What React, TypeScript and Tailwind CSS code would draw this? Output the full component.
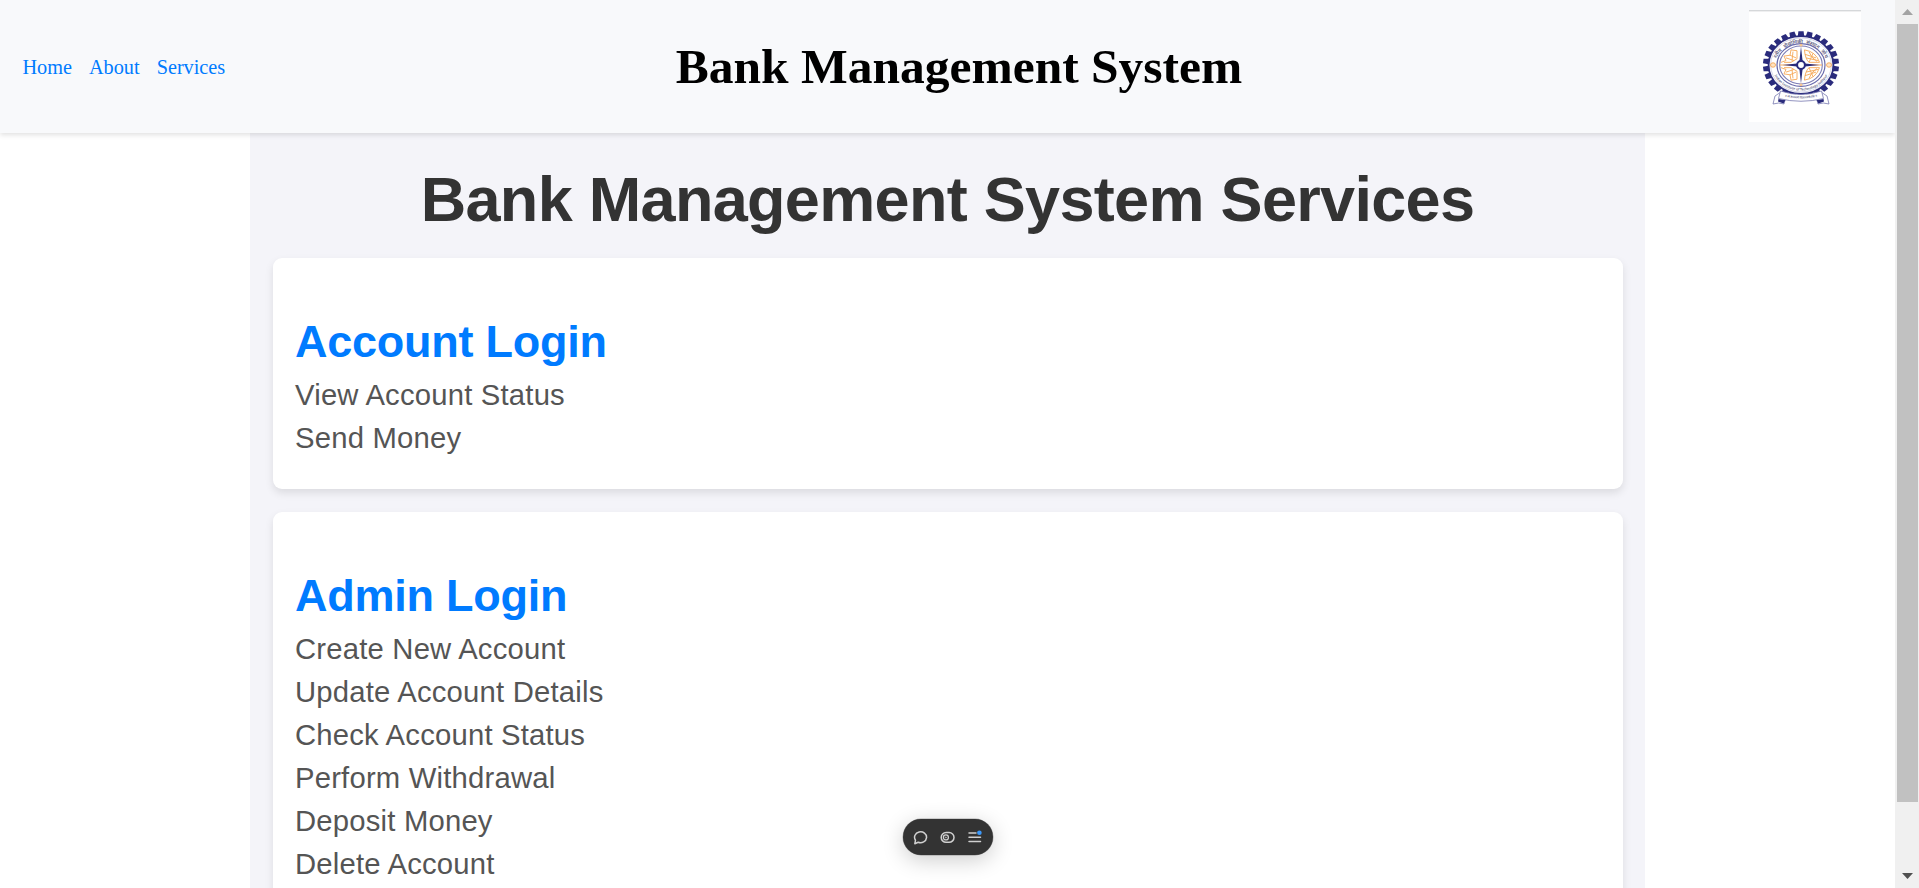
const links = ['Home', 'About', 'Services'];

const services = [
  { title: 'Account Login', items: ['View Account Status', 'Send Money'] },
  {
    title: 'Admin Login',
    items: [
      'Create New Account',
      'Update Account Details',
      'Check Account Status',
      'Perform Withdrawal',
      'Deposit Money',
      'Delete Account',
    ],
  },
];

const teeth = Array.from({ length: 26 }, (_, i) => (i * 360) / 26);
const quarters = [0, 90, 180, 270];

function Emblem() {
  return (
    <svg viewBox="0 0 112 112" className="mb-px block h-28 w-28 bg-white">
      <rect width="112" height="1.4" fill="#d6d8da" />
      <g transform="translate(52 55)">
        <g transform="scale(1 0.89)">
          <g fill="#2a2b7c">
            {teeth.map((a) => (
              <path key={a} d="M-3.2 -32.5 L-2.6 -38 H2.6 L3.2 -32.5 Z" transform={`rotate(${a})`} />
            ))}
          </g>
          <circle r="32.4" fill="#fff" stroke="#2a2b7c" strokeWidth="1.8" />
          <circle r="30.4" fill="none" stroke="#a9a9cf" strokeWidth="0.5" />
          <circle r="24" fill="none" stroke="#6a6bab" strokeWidth="1.2" />
          <circle r="21.3" fill="none" stroke="#7d7db5" strokeWidth="1.1" />
          <g fill="none" stroke="#f7ab5c" strokeWidth="1">
            <path d="M3.5 -17 Q15 -15 18.5 -3 H8 Q4 -7 3.5 -17 Z M4 -12 L15 -8 M5 -8 L17 -5 M8 -15 Q10 -8 16 -4 M12 -13 L8 -3" />
            <path d="M3.5 17 Q15 15 18.5 3 H8 Q4 7 3.5 17 Z M4 12 L15 8 M5 8 L17 5 M8 15 Q10 8 16 4 M12 13 L8 3" />
            <path d="M-4 -16 L-10 -17 L-11 -11 L-17 -10 L-15 -5 L-20 -3 M-4 -16 V-7 L-10 -3 H-17 M-11 -11 L-5 -8 M-8 -15 L-9 -5 M-15 -8 L-7 -5" />
            <path d="M-4 16 L-10 17 L-11 11 L-17 10 L-15 5 L-20 3 M-4 16 V7 L-10 3 H-17 M-11 11 L-5 8 M-8 15 L-9 5 M-15 8 L-7 5" />
            <path d="M-21 0 H-7 M7 0 H21" strokeWidth="1.4" />
            <circle cx="-28" r="2.5" fill="#fde3c4" />
            <circle cx="28" r="2.5" fill="#fde3c4" />
          </g>
          <g fill="#fde3c4" stroke="#f7ab5c" strokeWidth="0.7">
            <circle cy="-22.3" r="1.1" />
            <circle cy="22.3" r="1.1" />
          </g>
        </g>
        <g fill="#2a2b7c">
          {quarters.map((a) => (
            <path key={a} d="M-1.6 -4 L0 -18.5 L1.6 -4 Z" transform={`rotate(${a})`} />
          ))}
        </g>
        <circle r="3.9" fill="#fff" stroke="#2a2b7c" strokeWidth="2" />
        <defs>
          <path id="arc-top" d="M-24.6 -6 A25.8 22.6 0 0 1 24.6 -6" />
          <path id="arc-bottom" d="M-27.2 8.5 A28.9 25.8 0 0 0 27.2 8.5" />
          <path id="arc-motto" d="M-16 31.5 Q0 35.5 16 31.5" />
        </defs>
        <g fill="#5a5a80" fontFamily="'Noto Sans', 'Liberation Sans', sans-serif" fontWeight="600" textAnchor="middle">
          <text fontSize="5" wordSpacing="2">
            <textPath href="#arc-top" startOffset="50%">भारतीय प्रौद्योगिकी संस्थान जोधपुर</textPath>
          </text>
          <text fontSize="3.4">
            <textPath href="#arc-bottom" startOffset="50%">Indian Institute of Technology Jodhpur</textPath>
          </text>
        </g>
        <path d="M-20 27 L-26 31 L-28 39 Q-22 37 -17 39 L-16 35 M20 27 L26 31 L28 39 Q22 37 17 39 L16 35" fill="#fff" stroke="#7778b0" strokeWidth="0.8" />
        <path d="M-22.5 34 L-15.5 35 L-17.5 38.5 L-23 36.5 Z M22.5 34 L15.5 35 L17.5 38.5 L23 36.5 Z" fill="#2a2b7c" />
        <path d="M-20.5 26 Q0 33 20.5 26 L22.5 33.5 Q0 39 -22.5 33.5 Z" fill="#fff" stroke="#7778b0" strokeWidth="0.8" />
        <text fontSize="2.8" fill="#5a5a80" fontFamily="'Noto Sans', 'Liberation Sans', sans-serif" fontWeight="600" textAnchor="middle">
          <textPath href="#arc-motto" startOffset="50%">॥ त्वं ज्ञानमयो विज्ञानमयोऽसि ॥</textPath>
        </text>
      </g>
    </svg>
  );
}

function Header() {
  return (
    <header className="relative z-10 flex h-[133px] shrink-0 items-center bg-[#f8f9fb] pr-[34px] pl-[22.5px] font-['Liberation_Serif',serif] shadow-[0_2px_5px_rgba(0,0,0,0.12)]">
      <nav className="flex w-[202px] gap-[17px] text-[20.25px] leading-6 text-[#007bff]">
        {links.map((l) => (
          <a key={l}>{l}</a>
        ))}
      </nav>
      <div className="flex-1 pr-[55.5px] text-center text-[49.5px] leading-[56px] font-bold whitespace-nowrap text-black">
        Bank Management System
      </div>
      <Emblem />
    </header>
  );
}

function Scrollbar() {
  return (
    <div className="flex w-6 shrink-0 flex-col items-center bg-[#f0f0f0]">
      <div className="flex h-6 items-center">
        <svg viewBox="0 0 11 6" className="h-1.5 w-[11px]">
          <path d="M5.5 0 L11 6 H0 Z" fill="#a3a3a3" />
        </svg>
      </div>
      <div className="h-[778px] w-[21px] bg-[#c1c1c1]" />
      <div className="mt-auto flex h-6 items-center">
        <svg viewBox="0 0 11 6" className="h-1.5 w-[11px]">
          <path d="M0 0 H11 L5.5 6 Z" fill="#505050" />
        </svg>
      </div>
    </div>
  );
}

function Toolbar() {
  return (
    <div className="absolute bottom-[33px] left-[903px] z-20 flex h-9 w-[90px] items-center justify-center gap-3 rounded-full bg-[#333] pr-0.5 shadow-[0_0_0_0.5px_rgba(0,0,0,0.3),0_5px_22px_rgba(0,0,0,0.2)]">
      <svg viewBox="0 0 15 15" className="size-[15px]" fill="none" stroke="#d0d0d0" strokeWidth="1.5">
        <path d="M1.8 13.8 L2.5 10.2 A6 5.5 0 1 1 5.2 12.3 Z" strokeLinejoin="round" />
      </svg>
      <svg viewBox="0 0 15 15" className="size-[15px]" fill="none" stroke="#d0d0d0" strokeWidth="1.5">
        <rect x="1.2" y="2.5" width="12.8" height="9.8" rx="4.9" />
        <circle cx="5.9" cy="7.4" r="2.5" strokeWidth="1.3" />
        <circle cx="5.9" cy="7.4" r="0.5" strokeWidth="0.8" />
      </svg>
      <svg viewBox="0 0 15 15" className="size-[15px]" fill="none">
        <path d="M2 3 H9 M2 7.2 H13.5 M2 11.5 H13.5" stroke="#d0d0d0" strokeWidth="1.5" strokeLinecap="round" />
        <circle cx="12.4" cy="2.8" r="2.3" fill="#3b99fc" />
      </svg>
    </div>
  );
}

export default function App() {
  return (
    <div className="flex h-[888px] overflow-hidden bg-white">
      <div className="relative flex min-w-0 flex-1 flex-col overflow-hidden">
        <Header />
        <main className="mx-auto flex w-[1395px] flex-1 flex-col bg-[#f4f4f9] px-[22.5px] pt-[30px] font-['Liberation_Sans',sans-serif]">
          <h1 className="mb-[23px] text-center text-[63px] leading-[72px] font-bold tracking-[-0.69px] whitespace-nowrap text-[#333]">
            Bank Management System Services
          </h1>
          {services.map((s) => (
            <section
              key={s.title}
              className="mb-[23px] shrink-0 rounded-[9px] bg-white px-[22.5px] pt-[58px] pb-[29px] shadow-[0_4px_9px_rgba(0,0,0,0.1)]"
            >
              <h2 className="mb-1.5 text-[45px] leading-[52px] font-bold tracking-[-0.25px] text-[#007bff]">
                {s.title}
              </h2>
              <ul>
                {s.items.map((item) => (
                  <li key={item} className="text-[29.25px] leading-[43px] tracking-[0.2px] text-[#555]">
                    {item}
                  </li>
                ))}
              </ul>
            </section>
          ))}
        </main>
        <Toolbar />
      </div>
      <Scrollbar />
    </div>
  );
}
